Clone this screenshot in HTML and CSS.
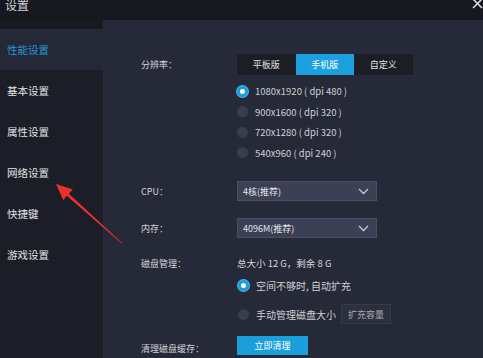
FILE: index.html
```html
<!DOCTYPE html>
<html>
<head>
<meta charset="utf-8">
<link rel="stylesheet" href="styles.css">
</head>
<body>
<div class="win">
  <div class="titlebar">
    <span class="title">设置</span>
    <svg class="close" width="11" height="11" viewBox="0 0 11 11"><path d="M1 0 L10 9 M10 0 L1 9" stroke="#d8d8dc" stroke-width="1.6"/></svg>
  </div>
  <div class="body">
    <div class="sidebar">
      <div class="item active">性能设置</div>
      <div class="item">基本设置</div>
      <div class="item">属性设置</div>
      <div class="item">网络设置</div>
      <div class="item">快捷键</div>
      <div class="item">游戏设置</div>
    </div>
    <div class="main">
      <div class="row r-res">
        <div class="label">分辨率：</div>
        <div class="seg">
          <div class="seg-btn">平板版</div>
          <div class="seg-btn on">手机版</div>
          <div class="seg-btn">自定义</div>
        </div>
      </div>
      <div class="row r-radios">
        <div></div>
        <div class="radios">
          <div class="radio-line"><span class="radio on"></span>1080x1920 ( dpi 480 )</div>
          <div class="radio-line"><span class="radio"></span>900x1600 ( dpi 320 )</div>
          <div class="radio-line"><span class="radio"></span>720x1280 ( dpi 320 )</div>
          <div class="radio-line"><span class="radio"></span>540x960 ( dpi 240 )</div>
        </div>
      </div>
      <div class="row r-cpu">
        <div class="label">CPU：</div>
        <div class="select"><span>4核(推荐)</span><svg width="11" height="7" viewBox="0 0 11 7"><path d="M1 1 L5.5 5.5 L10 1" fill="none" stroke="#c8cad2" stroke-width="1.3"/></svg></div>
      </div>
      <div class="row r-mem">
        <div class="label">内存：</div>
        <div class="select"><span>4096M(推荐)</span><svg width="11" height="7" viewBox="0 0 11 7"><path d="M1 1 L5.5 5.5 L10 1" fill="none" stroke="#c8cad2" stroke-width="1.3"/></svg></div>
      </div>
      <div class="row r-disk">
        <div class="label">磁盘管理：</div>
        <div class="text">总大小 12 G，剩余 8 G</div>
      </div>
      <div class="row r-auto">
        <div></div>
        <div class="radio-line"><span class="radio on"></span>空间不够时, 自动扩充</div>
      </div>
      <div class="row r-manual">
        <div></div>
        <div class="radio-line"><span class="radio"></span>手动管理磁盘大小<span class="btn-gray">扩充容量</span></div>
      </div>
      <div class="row r-clean">
        <div class="label">清理磁盘缓存：</div>
        <div><span class="btn-blue">立即清理</span></div>
      </div>
    </div>
  </div>
  <svg class="arrow" width="483" height="358" viewBox="0 0 483 358">
    <polygon points="56,184 72.8,189.6 68.9,193.8 122.4,243.2 121.7,243.6 66.8,195.8 63.2,200" fill="#e8322b"/>
  </svg>
</div>
</body>
</html>
```
FILE: styles.css
```css
* { box-sizing: border-box; }
html, body { margin: 0; padding: 0; }
body {
  width: 483px;
  height: 358px;
  overflow: hidden;
  background: #262937;
  font-family: "Noto Sans CJK SC", "Liberation Sans", sans-serif;
  color: #d6d7dc;
}
.win { position: relative; width: 483px; height: 358px; display: flex; flex-direction: column; }
.titlebar {
  height: 20px;
  background: #17181f;
  display: flex;
  justify-content: space-between;
  align-items: flex-start;
  flex: none;
}
.title { font-size: 12px; line-height: 12px; margin-top: -1px; margin-left: 5px; color: #d4d4d8; }
.close { margin-right: 0; margin-top: -1px; }
.body { flex: 1; display: flex; }
.sidebar {
  width: 103px;
  flex: none;
  background: #1c1e27;
  padding-top: 9px;
  box-shadow: inset 0 9px 0 #191a21;
}
.item {
  height: 41px;
  display: flex;
  align-items: center;
  padding-left: 7px;
  font-size: 10.5px;
  color: #e2e2e6;
}
.item.active { background: #252836; color: #1f9ad8; }
.main { flex: 1; padding-left: 38px; padding-top: 34px; }
.row { display: grid; grid-template-columns: 96px auto; align-items: center; }
.label { font-size: 9px; color: #d2d3d8; }
.seg { display: flex; height: 21px; }
.seg-btn {
  width: 58.5px;
  background: #1c1e26;
  font-size: 9px;
  color: #e0e0e4;
  display: flex;
  align-items: center;
  justify-content: center;
}
.seg-btn.on { background: #1ba1e0; color: #fff; }
.r-radios { margin-top: 6px; }
.radio-line {
  display: flex;
  align-items: center;
  height: 20.5px;
  font-size: 9.5px;
  color: #cfd0d6;
}
.radio {
  width: 11px;
  height: 11px;
  border-radius: 50%;
  background: #3a3d4c;
  margin-right: 7px;
  flex: none;
}
.radio.on {
  background: #fff;
  border: 3px solid #1a9ce0;
  box-shadow: 0 0 0 1px #4fb4ea;
}
.r-cpu { margin-top: 18px; }
.r-mem { margin-top: 17px; }
.select {
  width: 140px;
  height: 20px;
  background: #3c4054;
  border: 1px solid #4a4e63;
  display: flex;
  align-items: center;
  justify-content: space-between;
  padding: 0 7px 0 5px;
  font-size: 9px;
  color: #e2e3e8;
}
.r-disk { margin-top: 15px; height: 20px; }
.text { font-size: 9.5px; color: #d6d7dc; }
.r-auto { margin-top: 2px; }
.r-auto .radio-line, .r-manual .radio-line { height: 20px; font-size: 10px; }
.r-auto .radio, .r-manual .radio { margin-left: 1px; }
.r-manual { margin-top: 9px; }
.btn-gray {
  margin-left: 5px;
  width: 50px;
  height: 20px;
  background: #2c2f3e;
  border: 1px solid #363a4a;
  display: inline-flex;
  align-items: center;
  justify-content: center;
  font-size: 9px;
  color: #a8aab2;
}
.r-clean { margin-top: 12px; }
.btn-blue {
  width: 71px;
  height: 19px;
  background: #1a9fdc;
  display: inline-flex;
  align-items: center;
  justify-content: center;
  font-size: 9px;
  color: #fff;
  vertical-align: top;
}
.arrow { position: absolute; left: 0; top: 0; pointer-events: none; }
```
